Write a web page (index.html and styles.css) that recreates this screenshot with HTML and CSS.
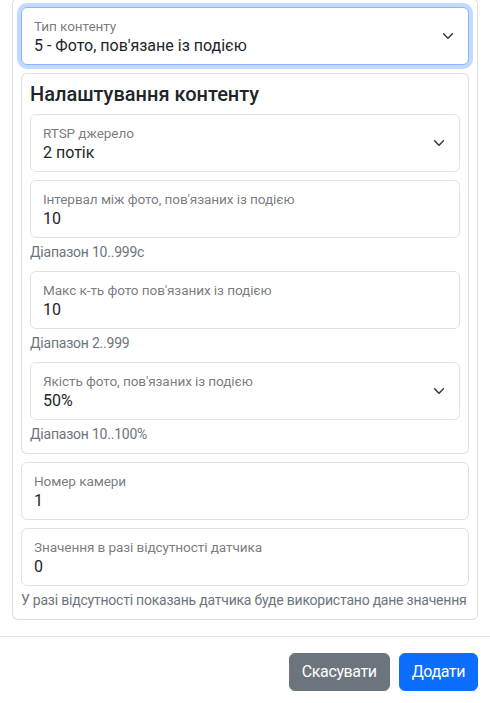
FILE: index.html
```html
<!DOCTYPE html>
<html lang="uk">
  <head>
    <meta charset="UTF-8" />
    <meta name="viewport" content="width=device-width, initial-scale=1.0" />
    <title>Додати контент</title>
    <link rel="stylesheet" href="styles.css">
  </head>
  <body>
    <div class="modal">
      <div class="modal-body">
        <div class="card card-outer">
          <div class="field field-focus">
            <span class="field-label">Тип контенту</span>
            <span class="field-value">5 - Фото, пов'язане із подією</span>
            <svg class="chevron" viewBox="0 0 16 16" width="16" height="12"><path d="m2 5 6 6 6-6" /></svg>
          </div>

          <div class="card card-inner">
            <h5 class="card-title">Налаштування контенту</h5>

            <div class="field">
              <span class="field-label">RTSP джерело</span>
              <span class="field-value">2 потік</span>
              <svg class="chevron" viewBox="0 0 16 16" width="16" height="12"><path d="m2 5 6 6 6-6" /></svg>
            </div>

            <div class="field field-helped">
              <span class="field-label">Інтервал між фото, пов'язаних із подією</span>
              <span class="field-value">10</span>
            </div>
            <div class="form-text">Діапазон 10..999с</div>

            <div class="field field-helped">
              <span class="field-label">Макс к-ть фото пов'язаних із подією</span>
              <span class="field-value">10</span>
            </div>
            <div class="form-text">Діапазон 2..999</div>

            <div class="field field-helped">
              <span class="field-label">Якість фото, пов'язаних із подією</span>
              <span class="field-value">50%</span>
              <svg class="chevron" viewBox="0 0 16 16" width="16" height="12"><path d="m2 5 6 6 6-6" /></svg>
            </div>
            <div class="form-text">Діапазон 10..100%</div>
          </div>

          <div class="field">
            <span class="field-label">Номер камери</span>
            <span class="field-value">1</span>
          </div>

          <div class="field field-helped">
            <span class="field-label">Значення в разі відсутності датчика</span>
            <span class="field-value">0</span>
          </div>
          <div class="form-text">У разі відсутності показань датчика буде використано дане значення</div>
        </div>
      </div>

      <div class="modal-footer">
        <button type="button" class="btn btn-secondary">Скасувати</button>
        <button type="button" class="btn btn-primary">Додати</button>
      </div>
    </div>
  </body>
</html>
```

FILE: styles.css
```css
html,
body {
  margin: 0;
  padding: 0;
}
body {
  background: #fff;
  color: #212529;
  font: normal 16px/1.5 Roboto, "Noto Sans", sans-serif;
  overflow: hidden;
}

/* Modal */
.modal {
  width: 100%;
}
.modal-body {
  padding: 0 12px 16px;
  margin-top: -2px; /* body is scrolled a little */
}
.modal-footer {
  display: flex;
  justify-content: flex-end;
  gap: 9px;
  padding: 16px 12px;
  border-top: 1px solid #dee2e6;
}

/* Cards */
.card {
  border: 1px solid rgba(0, 0, 0, 0.125);
  border-radius: 6px;
  padding: 8px 8px 0;
  background: #fff;
}
.card-inner {
  margin-bottom: 8px;
}
.card-title {
  margin: 0 0 8px;
  font-size: 20px;
  line-height: 24px;
  font-weight: 500;
  color: #212529;
}

/* Floating fields */
.field {
  position: relative;
  display: flex;
  flex-direction: column;
  box-sizing: border-box;
  height: 58px;
  padding: 10px 12px 0;
  margin-bottom: 8px;
  border: 1px solid #dee2e6;
  border-radius: 6px;
  background: #fff;
}
.field-helped {
  margin-bottom: 0;
}
.field-focus {
  border-color: #86b7fe;
  box-shadow: 0 0 0 4px rgba(13, 110, 253, 0.25);
}
.field-label {
  font-size: 13.6px;
  line-height: 16px;
  letter-spacing: -0.1px;
  color: rgba(33, 37, 41, 0.62);
  white-space: nowrap;
}
.field-value {
  margin-top: 2px;
  font-size: 16px;
  line-height: 20px;
  color: #212529;
}
.chevron {
  position: absolute;
  right: 12px;
  top: 50%;
  transform: translateY(-50%);
  fill: none;
  stroke: #343a40;
  stroke-width: 2;
  stroke-linecap: round;
  stroke-linejoin: round;
}
.form-text {
  margin: 4px 0 8px;
  font-size: 14px;
  line-height: 21px;
  letter-spacing: -0.22px;
  color: #6c757d;
  white-space: nowrap;
}

/* Buttons */
.btn {
  font: inherit;
  font-size: 16px;
  line-height: 24px;
  letter-spacing: -0.4px;
  padding: 6px 12px;
  border: 1px solid transparent;
  border-radius: 6px;
  color: #fff;
  cursor: pointer;
}
.btn-secondary {
  background: #6c757d;
  border-color: #6c757d;
}
.btn-primary {
  background: #0d6efd;
  border-color: #0d6efd;
}
```
